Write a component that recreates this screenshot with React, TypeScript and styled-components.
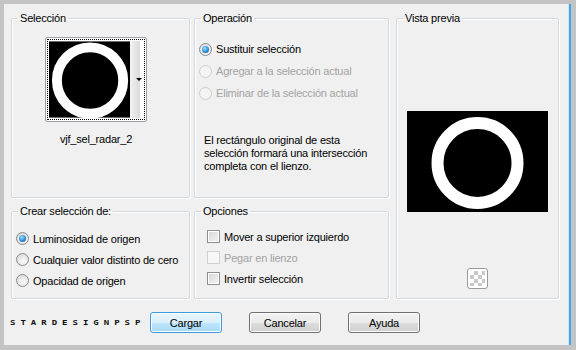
import styled, { createGlobalStyle, css } from 'styled-components'

const GlobalStyle = createGlobalStyle`
  html, body {
    margin: 0;
    padding: 0;
    background: #c4c4c4;
  }
  * {
    box-sizing: border-box;
  }
`

function RingPicture({ width, height, cx, cy, r, stroke }) {
    return (
        <svg width={width} height={height} viewBox={`0 0 ${width} ${height}`}>
            <rect width={width} height={height} fill="#000" />
            <circle cx={cx} cy={cy} r={r} fill="none" stroke="#fff" strokeWidth={stroke} />
        </svg>
    )
}

function App() {
    return (
        <Frame>
            <GlobalStyle />
            <Panel>
                <Groups>
                    <Group $area="sel">
                        <Legend>Selección</Legend>
                        <SelectionBody>
                            <Thumb>
                                <FocusBox>
                                    <RingPicture width={82} height={77} cx={41.5} cy={39.5} r={33.5} stroke={10} />
                                    <Strip>
                                        <Arrow />
                                    </Strip>
                                </FocusBox>
                            </Thumb>
                            <ThumbName>vjf_sel_radar_2</ThumbName>
                        </SelectionBody>
                    </Group>

                    <Group $area="op">
                        <Legend>Operación</Legend>
                        <OptionList $top={13} $left={4} $row={22}>
                            <Option>
                                <Radio $checked />
                                <Label>Sustituir selección</Label>
                            </Option>
                            <Option>
                                <Radio $disabled />
                                <Label $disabled>Agregar a la selección actual</Label>
                            </Option>
                            <Option>
                                <Radio $disabled />
                                <Label $disabled>Eliminar de la selección actual</Label>
                            </Option>
                        </OptionList>
                        <Note>
                            El rectángulo original de esta<br />
                            selección formará una intersección<br />
                            completa con el lienzo.
                        </Note>
                    </Group>

                    <Group $area="prev">
                        <Legend>Vista previa</Legend>
                        <PreviewBody>
                            <RingPicture width={141} height={101} cx={70.5} cy={52} r={40} stroke={12} />
                            <Checker />
                        </PreviewBody>
                    </Group>

                    <Group $area="crear">
                        <Legend>Crear selección de:</Legend>
                        <OptionList $top={10} $left={4} $row={21}>
                            <Option>
                                <Radio $checked />
                                <Label>Luminosidad de origen</Label>
                            </Option>
                            <Option>
                                <Radio />
                                <Label>Cualquier valor distinto de cero</Label>
                            </Option>
                            <Option>
                                <Radio />
                                <Label>Opacidad de origen</Label>
                            </Option>
                        </OptionList>
                    </Group>

                    <Group $area="opc">
                        <Legend>Opciones</Legend>
                        <OptionList $top={8} $left={12} $row={21}>
                            <Option>
                                <Check />
                                <Label>Mover a superior izquierdo</Label>
                            </Option>
                            <Option>
                                <Check $disabled />
                                <Label $disabled>Pegar en lienzo</Label>
                            </Option>
                            <Option>
                                <Check />
                                <Label>Invertir selección</Label>
                            </Option>
                        </OptionList>
                    </Group>
                </Groups>

                <ButtonBar>
                    <Stamp>stardesignpsp</Stamp>
                    <Button $focused>Cargar</Button>
                    <Button>Cancelar</Button>
                    <Button>Ayuda</Button>
                </ButtonBar>
            </Panel>
        </Frame>
    )
}

export default App

const Frame = styled.div`
    width: 576px;
    height: 350px;
    padding: 4px 5px 5px 4px;
    background: #c4c4c4;
    font-family: "Liberation Sans", Arial, sans-serif;
    font-size: 11px;
    letter-spacing: -0.2px;
    color: #000;
`
const Panel = styled.div`
    height: 100%;
    background: #f0f0f0;
    border-right: 2px solid #3ea6ea;
    box-shadow: inset -1px 0 0 #cfe6f5;
    padding: 8px 0 0 7px;
`
const Groups = styled.div`
    display: grid;
    grid-template-columns: 179px 195px 166px;
    grid-template-rows: 186px 94px;
    column-gap: 4px;
    row-gap: 7px;
    grid-template-areas:
        "sel op prev"
        "crear opc prev";
    > :nth-child(3) { margin-left: 3px; }
`
const Group = styled.fieldset`
    grid-area: ${p => p.$area};
    margin: 0;
    padding: 0;
    min-width: 0;
    border: 1px solid #d3d8dc;
    border-radius: 2px;
    box-shadow: inset 1px 1px 0 #fff, 1px 1px 0 #fff;
`
const Legend = styled.legend`
    margin-left: 6px;
    padding: 0 2px;
    line-height: 13px;
    color: #000;
`
const SelectionBody = styled.div`
    display: flex;
    flex-direction: column;
    align-items: center;
    padding: 12px 9px 0 0;
`
const Thumb = styled.div`
    width: 102px;
    height: 85px;
    padding: 1px;
    border: 1px solid #9ca0a6;
    border-radius: 2px;
    background: #fff;
`
const FocusBox = styled.div`
    display: flex;
    height: 100%;
    padding: 1px 4px 1px 1px;
    border: 1px dotted #000;
`
const Strip = styled.div`
    position: relative;
    width: 10px;
    background: linear-gradient(90deg, #f3f3f3, #dadada);
`
const Arrow = styled.span`
    position: absolute;
    left: 6px;
    top: 37px;
    border-left: 3px solid transparent;
    border-right: 3px solid transparent;
    border-top: 3px solid #000;
`
const ThumbName = styled.div`
    margin-top: 11px;
    line-height: 13px;
`
const OptionList = styled.div`
    display: flex;
    flex-direction: column;
    padding: ${p => p.$top}px 0 0 ${p => p.$left}px;
    > * { height: ${p => p.$row}px; }
`
const Option = styled.div`
    display: flex;
    align-items: center;
    gap: 4px;
`
const Label = styled.span`
    white-space: nowrap;
    color: ${p => (p.$disabled ? '#a3a3a3' : '#000')};
`
const Radio = styled.span`
    position: relative;
    flex: none;
    width: 13px;
    height: 13px;
    border-radius: 50%;
    border: 1px solid ${p => (p.$disabled ? '#cdcdcd' : '#8a8a8a')};
    background: ${p => (p.$disabled
        ? '#f4f4f4'
        : 'radial-gradient(circle at 60% 65%, #fafafa 0%, #e6e6e6 55%, #cfcfcf 100%)')};
    ${p => p.$checked && css`
        &::after {
            content: "";
            position: absolute;
            left: 2px;
            top: 2px;
            width: 7px;
            height: 7px;
            border-radius: 50%;
            background: radial-gradient(circle at 40% 35%, #9fe0ff 0%, #2c8ed3 55%, #13457a 100%);
        }
    `}
`
const Check = styled.span`
    flex: none;
    width: 13px;
    height: 13px;
    border: 1px solid ${p => (p.$disabled ? '#d0d0d0' : '#8e8f8f')};
    background: ${p => (p.$disabled
        ? '#f7f7f7'
        : 'linear-gradient(135deg, #d6d6d6, #f4f4f4)')};
    box-shadow: inset 0 0 0 1px ${p => (p.$disabled ? '#f7f7f7' : '#fff')};
`
const Note = styled.p`
    margin: 30px 0 0 9px;
    line-height: 13px;
`
const PreviewBody = styled.div`
    display: flex;
    flex-direction: column;
    align-items: center;
    padding-top: 86px;
    > svg { display: block; }
`
const Checker = styled.span`
    margin-top: 56px;
    width: 21px;
    height: 21px;
    padding: 2px;
    border: 1px solid #9a9a9a;
    border-radius: 3px;
    background: repeating-conic-gradient(#c9c9c9 0 25%, #ffffff 0 50%) 0 0 / 8px 8px;
    background-clip: content-box;
    background-origin: content-box;
    box-shadow: inset 0 0 0 2px #fff;
`
const ButtonBar = styled.div`
    display: flex;
    align-items: center;
    gap: 27px;
    margin: 13px 0 0 -1px;
`
const Stamp = styled.div`
    width: 113px;
    font-family: "DejaVu Sans Mono", monospace;
    font-size: 9px;
    font-weight: bold;
    text-transform: uppercase;
    letter-spacing: 5px;
    white-space: nowrap;
    color: #111;
    transform: scaleY(0.75);
`
const Button = styled.button`
    width: 72px;
    height: 21px;
    padding: 0;
    font: inherit;
    letter-spacing: inherit;
    color: #000;
    border-radius: 3px;
    border: 1px solid ${p => (p.$focused ? '#3c9be0' : '#707070')};
    background: ${p => (p.$focused
        ? 'linear-gradient(#eaf6fd 0%, #d9f0fc 50%, #bee6fd 51%, #a7d9f5 100%)'
        : 'linear-gradient(#f2f2f2 0%, #ebebeb 50%, #dddddd 51%, #cfcfcf 100%)')};
    box-shadow: inset 0 0 0 1px ${p => (p.$focused ? '#fdfeff' : '#fcfcfc')};
`
